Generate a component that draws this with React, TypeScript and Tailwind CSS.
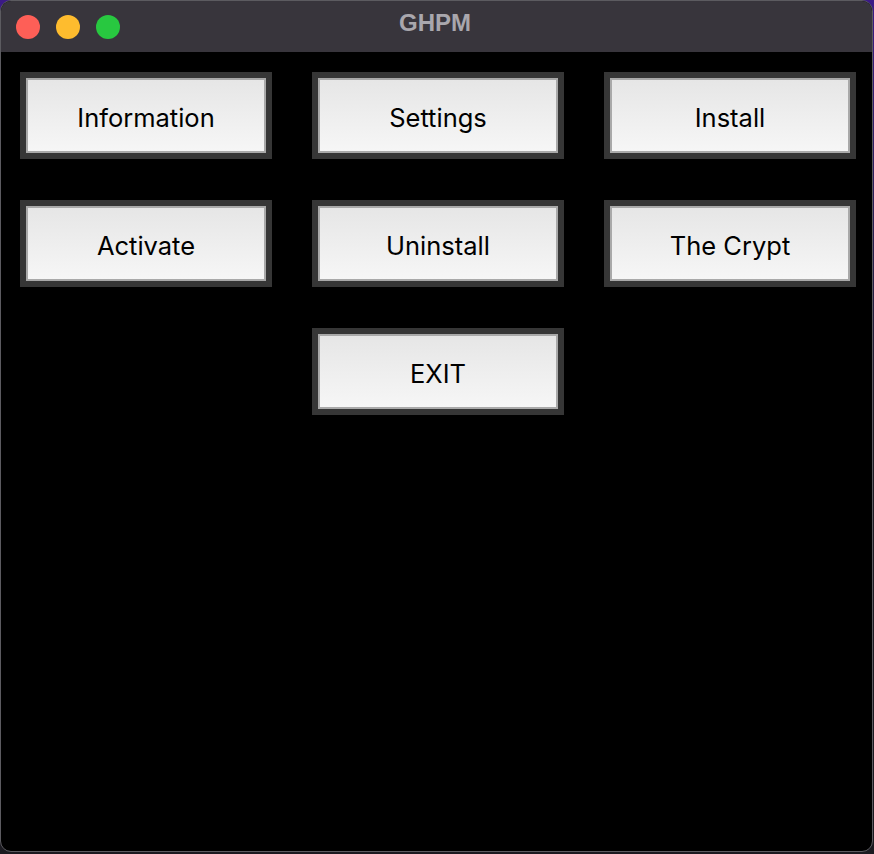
import React from 'react';

const buttons = ['Information', 'Settings', 'Install', 'Activate', 'Uninstall', 'The Crypt'];

const Btn: React.FC<{ label: string }> = ({ label }) => (
    <button className="h-[87px] w-[252px] bg-[#363636] p-[6px]">
        <div className="flex h-full w-full items-center justify-center border-2 border-[#a9a9a9] bg-gradient-to-b from-[#e6e6e6] to-[#f6f6f6] pt-[6px] text-[25.5px] text-black [font-family:Inter,'Liberation_Sans',sans-serif]">
            {label}
        </div>
    </button>
);

export default function App() {
    return (
        <div className="h-[854px] w-[874px] bg-gradient-to-b from-[#3b1a86] via-[#1d1a24] to-[#1b1a20]">
            <div className="flex h-[852px] w-[873px] flex-col overflow-hidden rounded-[11px] border border-[#5c5b60] bg-black">
                <div className="relative flex h-[51px] shrink-0 items-center bg-[#38353c] px-[15px]">
                    <div className="flex gap-4">
                        <span className="h-6 w-6 rounded-full bg-[#fe5f57]" />
                        <span className="h-6 w-6 rounded-full bg-[#febc2e]" />
                        <span className="h-6 w-6 rounded-full bg-[#28c840]" />
                    </div>
                    <div className="absolute inset-x-0 top-[4px] pr-[3px] text-center text-[24px] font-bold text-[#a9a7ad] [font-family:'Liberation_Sans',Arial,sans-serif]">
                        GHPM
                    </div>
                </div>
                <div className="grid grid-cols-[252px_252px_252px] gap-x-10 gap-y-[41px] pl-[19px] pt-5">
                    {buttons.map((b) => (
                        <Btn key={b} label={b} />
                    ))}
                    <div className="col-start-2">
                        <Btn label="EXIT" />
                    </div>
                </div>
            </div>
        </div>
    );
}
